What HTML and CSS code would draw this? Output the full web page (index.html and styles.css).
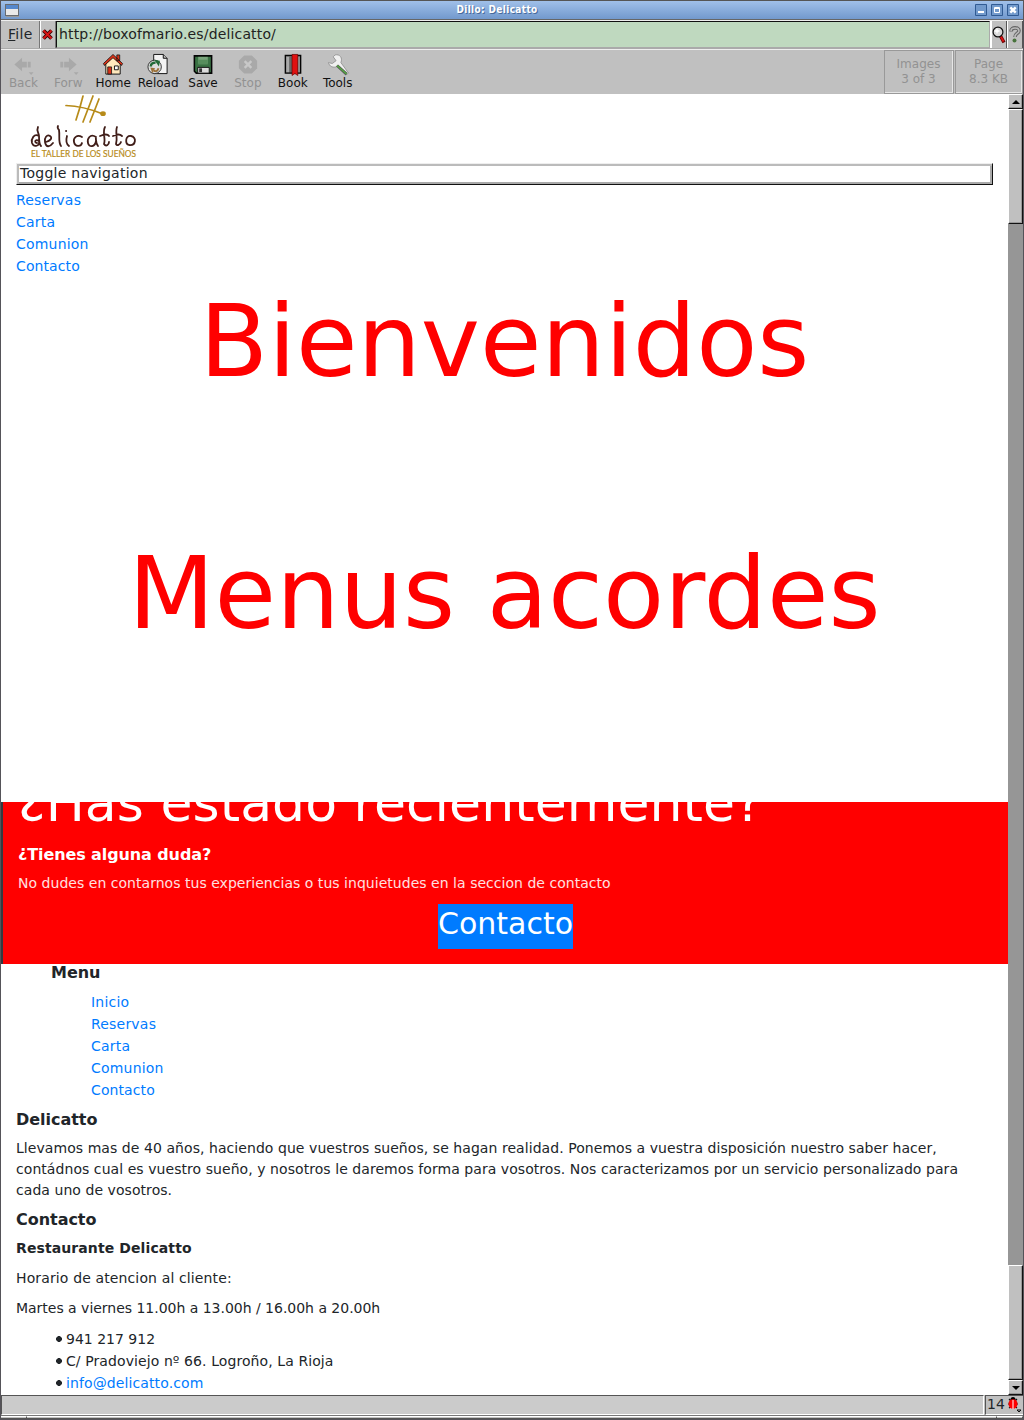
FILE: index.html
```html
<!DOCTYPE html>
<html lang="es">
<head>
<meta charset="utf-8">
<title>Dillo: Delicatto</title>
<link rel="stylesheet" href="styles.css">
</head>
<body>
<div class="window">
<header class="titlebar">
<svg class="window-icon" width="14" height="13" viewBox="0 0 14 13" shape-rendering="crispEdges"><path fill="#e9e9e9" stroke="#686b70" d="M.5.5h13v11H.5z"/><path fill="#5688cc" d="M1 1h12v4H1z"/><path fill="#999" d="M1 12h13v1H1z"/></svg>
<h1 class="window-title">Dillo: Delicatto</h1>
<div class="window-controls">
<svg width="12" height="12" viewBox="0 0 12 12"><path class="control-box" d="M.5.5h11v11H.5z"/><path fill="#fff" d="M3 7h6v2H3z"/></svg>
<svg width="12" height="12" viewBox="0 0 12 12"><path class="control-box" d="M.5.5h11v11H.5z"/><path fill="none" stroke="#fff" d="M3.5 3.5h5v5h-5zM3 4.500h6"/></svg>
<svg width="12" height="12" viewBox="0 0 12 12"><path class="control-box" d="M.5.5h11v11H.5z"/><path fill="none" stroke="#fff" stroke-width="2.400" d="m3.300 3.300 5.400 5.400m0-5.400L3.300 8.700"/></svg>
</div>
</header>
<div class="locationbar">
<div class="file-menu"><u>F</u>ile</div>
<div class="clear-button"><svg width="11" height="11" viewBox="0 0 11 11"><path fill="none" stroke="#300" stroke-width="3.800" d="m1.500 1.500 8 8m0-8-8 8"/><path fill="none" stroke="#d71515" stroke-width="2" d="m1.500 1.500 8 8m0-8-8 8"/></svg></div>
<div class="address">http://boxofmario.es/delicatto/</div>
<div class="search-button"><svg width="14" height="18" viewBox="0 0 14 18"><path stroke="#600" stroke-width="3.400" d="m8.500 10 3.500 6.500"/><path stroke="#e01010" stroke-width="1.800" d="m8.500 10 3 5.500"/><circle cx="6" cy="6" r="4.900" fill="#d9d9d9" stroke="#111" stroke-width="1.200"/><path stroke="#fff" stroke-width="1.300" d="M2.500 5h5M5 2.500v5"/></svg></div>
<div class="help-button"><svg width="12" height="17" viewBox="0 0 12 17"><path fill="none" stroke="#666" stroke-width="3.600" d="M2 5.500c0-5 8-4.500 8-.8C10 7.500 6 7 6 11"/><path fill="none" stroke="#bbb" stroke-width="1.500" d="M2 5c0-4 8-4 8 0C10 7.500 6 7 6 11"/><circle cx="5.500" cy="14.500" r="2" fill="#48733c"/></svg></div>
</div>
<nav class="toolbar">
<div class="tool disabled"><svg viewBox="0 0 24 24"><path fill="#a9a9a9" d="m3 12 8-7v4h5v6h-5v4zM17 9h3v6h-3zM18 20h5l-2.500 3z"/></svg><span>Back</span></div>
<div class="tool disabled"><svg viewBox="0 0 24 24"><path fill="#a9a9a9" d="m21 12-8-7v4H8v6h5v4zM4 9h3v6H4zM18 20h5l-2.500 3z"/></svg><span>Forw</span></div>
<div class="tool"><svg viewBox="0 0 24 24"><path fill="#ffe9bd" stroke="#111" d="M4.500 11 12 4l7.500 7v11h-15z"/><path fill="#d83218" stroke="#111" stroke-width=".8" d="M16 2h3v6h-3zM2 11 12 1.500l10 9.500-1 2-9-8-9 8zM6.500 14.500h4V22h-4z"/><path fill="#fff" stroke="#111" d="M13.500 13.500h4v4h-4z"/></svg><span>Home</span></div>
<div class="tool"><svg viewBox="0 0 24 24"><path fill="#f3f3f3" stroke="#111" d="M7.500 1.500h10l4 4v16h-14z"/><path fill="#bbb" stroke="#111" d="M17.500 1.500v4h4"/><circle cx="8.500" cy="14.500" r="7" fill="#ddd" stroke="#333"/><path fill="none" stroke="#236b37" stroke-width="2.500" d="M4.500 14q0-4 5-4"/><path fill="#236b37" d="m8 7 6 1-1 6z"/><path fill="none" stroke="#9b7139" stroke-width="2" d="M12.500 16q-1 4-5 2.500"/><path fill="#9b7139" d="m4 15 5 1-3 5z"/></svg><span>Reload</span></div>
<div class="tool"><svg viewBox="0 0 24 24"><path fill="#397143" stroke="#050505" stroke-width="1.600" d="M3 3h18v18H5l-2-2z"/><path fill="#79a57c" d="M7 4h10v7H7z"/><path fill="#568d5c" d="M7 7h10v5H7z"/><path fill="#ddd" stroke="#111" d="M6.500 15h12v6h-12z"/><path fill="#333" d="M8 16h3v4H8z"/></svg><span>Save</span></div>
<div class="tool disabled"><svg viewBox="0 0 24 24"><path fill="#a9a9a9" d="M8 2.500h8l5.500 5.500v8L16 21.500H8L2.500 16V8z"/><path stroke="#c8c8c8" stroke-width="2.500" d="m8.500 8.500 7 7m0-7-7 7"/></svg><span>Stop</span></div>
<div class="tool"><svg viewBox="0 0 24 24"><path fill="#666" stroke="#050505" stroke-width="1.400" d="M4 2.500h16V21H4z"/><path fill="#aaa" d="M5 4h3v16H5z"/><path fill="#999" d="M17 4h2v16h-2z"/><path fill="#df1010" stroke="#600" stroke-width=".7" d="M11 1.500h6V23.500l-3-2-3 2z"/></svg><span>Book</span></div>
<div class="tool"><svg viewBox="0 0 24 24"><path fill="#f0f0f0" stroke="#888" stroke-width=".8" d="M9 2c5-1 8 3 6 8l8 11-3 2-9-9c-4 2-8 0-9-4l4 1 4-3-3-4z"/><path stroke="#555" stroke-width="3" d="m11 13 10 9"/><path stroke="#55aa40" stroke-width="1.500" d="m11 13 10 9"/></svg><span>Tools</span></div>
<div class="progress images">Images<br>3 of 3</div>
<div class="progress page-size">Page<br>8.3 KB</div>
</nav>
<div class="viewport">
<main class="page">
<svg class="logo" width="125" height="69" viewBox="0 0 125 69" role="img" aria-label="Delicatto, el taller de los sueños">
<g fill="none" stroke="#b78b19" stroke-width="1.700" stroke-linecap="round"><path d="M51 11.500Q68 12 88 20"/><path d="M68 2Q65 14 61 26M78 2Q73 15 68 28M84 5Q79 18 75 28"/><ellipse cx="88" cy="19.700" rx="2" ry="1.500" fill="#b78b19"/></g>
<g fill="none" stroke="#401e19" stroke-width="1.800" stroke-linecap="round" stroke-linejoin="round"><path d="M24 42c-5-3-8 3-7 7 2 5 8 3 7-2-4-3-5 2-2 2M24 42c0-3-3-5-1-9M24 42c0 4 0 8 2 10"/><path d="M31 48c4-1 7-4 4-6-3-2-6 2-5 6 1 6 5 5 8 1"/><path d="M43 32q-1 2 1 4c1 6-1 12 2 16M52 42q-2 7 2 10M51 37h.2M67 43c-5-3-9 1-8 5 1 5 7 5 8 1M81 43c-6-4-9 2-8 6 1 5 7 4 8-2 0-7-1 1 2 5"/><path d="M90 33c-3 5 1 12-1 17 2 3 5 1 5-2M85 42q7-3 9 0M102 33c-2 5 1 11-1 17 1 2 4 1 5-2M98 42q6-3 9 0"/><path d="M116 42c-6-1-6 8-2 9 7 1 8-8 2-9"/></g>
<text x="16" y="63" textLength="105" lengthAdjust="spacingAndGlyphs" fill="#b78b19" stroke="#b78b19" stroke-width=".2" font-family="Lato, sans-serif" font-size="9.800">EL TALLER DE LOS SUEÑOS</text>
</svg>
<div class="toggle">Toggle navigation</div>
<ul class="nav-links"><li><a>Reservas</a></li><li><a>Carta</a></li><li><a>Comunion</a></li><li><a class="contact-link">Contacto</a></li></ul>
<section class="slides"><h2>Bienvenidos</h2><h2>Menus acordes</h2></section>
<section class="callout"><h2><span class="raised">¿</span>Has estado recientemente?</h2><h3><span class="raised">¿</span>Tienes alguna duda?</h3><p>No dudes en contarnos tus experiencias o tus inquietudes en la seccion de contacto</p><a class="contact-button">Contacto</a></section>
<footer class="site-footer">
<h3 class="menu-heading">Menu</h3>
<ul class="footer-links"><li><a>Inicio</a></li><li><a>Reservas</a></li><li><a>Carta</a></li><li><a>Comunion</a></li><li><a class="contact-link">Contacto</a></li></ul>
<h3>Delicatto</h3>
<p class="about">Llevamos mas de 40 años, haciendo que vuestros sueños, se hagan realidad. Ponemos a vuestra disposición nuestro saber hacer,<br>contádnos cual es vuestro sueño, y nosotros le daremos forma para vosotros. Nos caracterizamos por un servicio personalizado para<br>cada uno de vosotros.</p>
<h3>Contacto</h3>
<h4>Restaurante Delicatto</h4>
<p class="hours opening">Horario de atencion al cliente:</p><p class="hours">Martes a viernes 11.00h a 13.00h / 16.00h a 20.00h</p>
<ul class="contact-list"><li>941 217 912</li><li class="street">C/ Pradoviejo nº 66. Logroño, La Rioja</li><li class="email"><a>info@delicatto.com</a></li></ul>
</footer>
</main>
<div class="scrollbar"><div class="scroll-button"><svg width="8" height="4" viewBox="0 0 8 4"><path d="m0 4 4-4 4 4z"/></svg></div><div class="thumb top-thumb"></div><div class="track"></div><div class="thumb bottom-thumb"></div><div class="scroll-button"><svg width="8" height="4" viewBox="0 0 8 4"><path d="m0 0 4 4 4-4z"/></svg></div></div>
</div>
<div class="statusbar"><div class="status-message"></div><div class="bug-meter"><span>14</span><svg width="15" height="17" viewBox="0 0 15 17"><path fill="none" stroke="#111" stroke-width="1.200" d="m2 3 2 2m6-2-2 2M1 8h10M2 12l8-6M2 6l8 6"/><circle cx="6" cy="3.500" r="2.500"/><ellipse cx="6" cy="8" rx="4.500" ry="4.800" fill="#f00"/><path stroke="#fff" d="M6 4v9"/><path stroke="#111" fill="#bbb" d="M10 14h4l-2 2z"/></svg></div></div>
<div class="resize-edge"><i></i><i></i><i></i></div>
</div>
</body>
</html>
```
FILE: styles.css
```css
* { box-sizing: border-box; }
body { margin: 0; font: 14px/21px "DejaVu Sans", sans-serif; color: #212529; }
h1, h2, h3, h4, p, ul { margin: 0; padding: 0; }
ul { list-style: none; }
svg { display: block; flex: none; }
.window { width: 1024px; height: 1420px; overflow: hidden; display: flex; flex-direction: column; border: 1px solid #555359; border-top: 0; background: #c0c0c0; }
.titlebar { height: 20px; display: grid; grid-template-columns: 50px 1fr 50px; align-items: center; border-top: 1px solid #555; border-bottom: 1px solid #666; background: linear-gradient(#a0c0e9, #7299cd); }
.window-icon { margin-left: 4px; }
.window-title { text-align: center; color: #fff; font: bold 10px/18px "DejaVu Sans Condensed", "DejaVu Sans", sans-serif; letter-spacing: .35px; text-shadow: 1px 1px #476a9b; padding-right: 30px; }
.window-controls { display: flex; gap: 4px; padding-left: 2px; }
.control-box { fill: #729acc; stroke: #315b93; }
.locationbar { height: 29px; flex: none; display: flex; border-top: 1px solid #eee; border-bottom: 1px solid #aaa; }
.file-menu { width: 39px; padding: 3px 0 0 7px; letter-spacing: .3px; border-right: 1px solid #777; }
.clear-button { width: 16px; display: flex; align-items: center; justify-content: center; border-left: 1px solid #fff; border-right: 1px solid #777; padding-right: 1px; }
.address { flex: 1; border: 2px solid #111; border-left-width: 1px; border-right: 1px solid #aaa; border-bottom: 1px solid #aaa; border-top-width: 1px; background: #bfd9bf; line-height: 25px; padding-left: 2px; color: #222; letter-spacing: .15px; }
.search-button, .help-button { display: flex; align-items: center; justify-content: center; border-left: 1px solid #fff; border-right: 1px solid #555; }
.search-button { width: 17px; border-left-width: 2px; padding-right: 1px; }
.help-button { width: 16px; padding-right: 1px; }
.toolbar { height: 45px; flex: none; display: flex; border-top: 1px solid #eee; font-size: 12px; line-height: 14px; color: #111; }
.tool { width: 44.9px; display: flex; flex-direction: column; align-items: center; padding-top: 3px; }
.tool svg { width: 24px; height: 23px; }
.disabled, .progress { color: #929292; }
.progress { text-align: center; height: 44px; padding: 6px 1px 0 0; line-height: 15px; border: 1px solid #999; box-shadow: inset -1px -1px #e6e6e6; }
.images { width: 70px; margin-left: auto; margin-right: 1px; }
.page-size { width: 68px; }
.viewport { height: 1301px; flex: none; display: flex; }
.page { width: 1007px; background: #fff; overflow: hidden; }
.logo { margin-left: 14px; }
.toggle { width: 977px; height: 22px; margin-left: 15px; border: 1px solid #eee; border-right-color: #111; border-bottom-color: #111; box-shadow: inset 2px 2px #bbb, inset -2px -2px #aaa; padding-left: 3px; line-height: 19px; letter-spacing: .26px; }
.nav-links { padding: 4px 0 0 15px; }
li { height: 22px; line-height: 22px; }
a { color: #007bff; }
.nav-links a, .footer-links a { letter-spacing: .2px; }
.nav-links .contact-link, .footer-links .contact-link { letter-spacing: .1px; }
.slides { height: 525px; color: red; text-align: center; }
.slides h2 { height: 252px; font-size: 100px; font-weight: 400; line-height: 129px; }
.callout { height: 162px; overflow: hidden; background: red; color: #fff; border-left: 2px solid #343a40; padding-left: 15px; }
.callout h2 { font-size: 52px; font-weight: 400; line-height: 50px; letter-spacing: .06px; margin-top: -24px; white-space: nowrap; }
.callout h3 { margin-top: 17px; letter-spacing: -.1px; }
.raised { vertical-align: .185em; line-height: 0; }
.callout p { margin-top: 8px; color: #ffe0e0; letter-spacing: .03px; }
.contact-button { display: block; width: 135px; height: 45px; margin: 10px 0 0 420px; background: #007bff; color: #fff; font-size: 30px; line-height: 39px; }
h3 { font-size: 16px; line-height: 20px; letter-spacing: -.03px; }
.site-footer { padding: 0 15px; }
.menu-heading { margin: -1px 0 8px 35px; }
.footer-links { margin: 0 0 9px 75px; }
.about { margin: 8px 0 9px; white-space: nowrap; letter-spacing: .06px; }
h4 { font-size: 14px; line-height: 20px; margin: 8px 0 10px; letter-spacing: .1px; }
.hours { margin-bottom: 9px; letter-spacing: -.02px; }
.opening { letter-spacing: .13px; }
.contact-list { padding-left: 40px; }
.contact-list li { display: flex; align-items: center; gap: 4px; }
.contact-list .street { letter-spacing: .09px; }
.contact-list .email { letter-spacing: .11px; }
.contact-list li::before { content: ""; width: 6px; height: 6px; background: #212529; clip-path: polygon(35% 0, 65% 0, 100% 35%, 100% 65%, 65% 100%, 35% 100%, 0 65%, 0 35%); }
.scrollbar { width: 15px; display: flex; flex-direction: column; background: #969696; }
.scroll-button { height: 15px; display: flex; align-items: center; justify-content: center; }
.scroll-button, .thumb { background: #c0c0c0; border: 1px solid #fff; border-right-color: #111; border-bottom-color: #111; box-shadow: inset -1px -1px #999; }
.track { flex: 1; }
.top-thumb { height: 115px; }
.bottom-thumb { height: 115px; }
.statusbar { height: 20px; flex: none; display: flex; gap: 1px; }
.status-message { flex: 1; background: #cbcbcb; border: 1px solid #555; border-bottom-color: #fff; border-right-color: #fff; }
.bug-meter { width: 38px; display: flex; align-items: center; gap: 2px; border: 1px solid #555; border-right: 0; border-bottom-color: #fff; padding: 0 0 1px 1px; }
.resize-edge { height: 5px; display: grid; grid-template-columns: 26px 1fr 26px; border-top: 1px solid #777; border-bottom: 1px solid #555; }
.resize-edge i { border-top: 1px solid #fff; border-right: 1px solid #555; }
```
